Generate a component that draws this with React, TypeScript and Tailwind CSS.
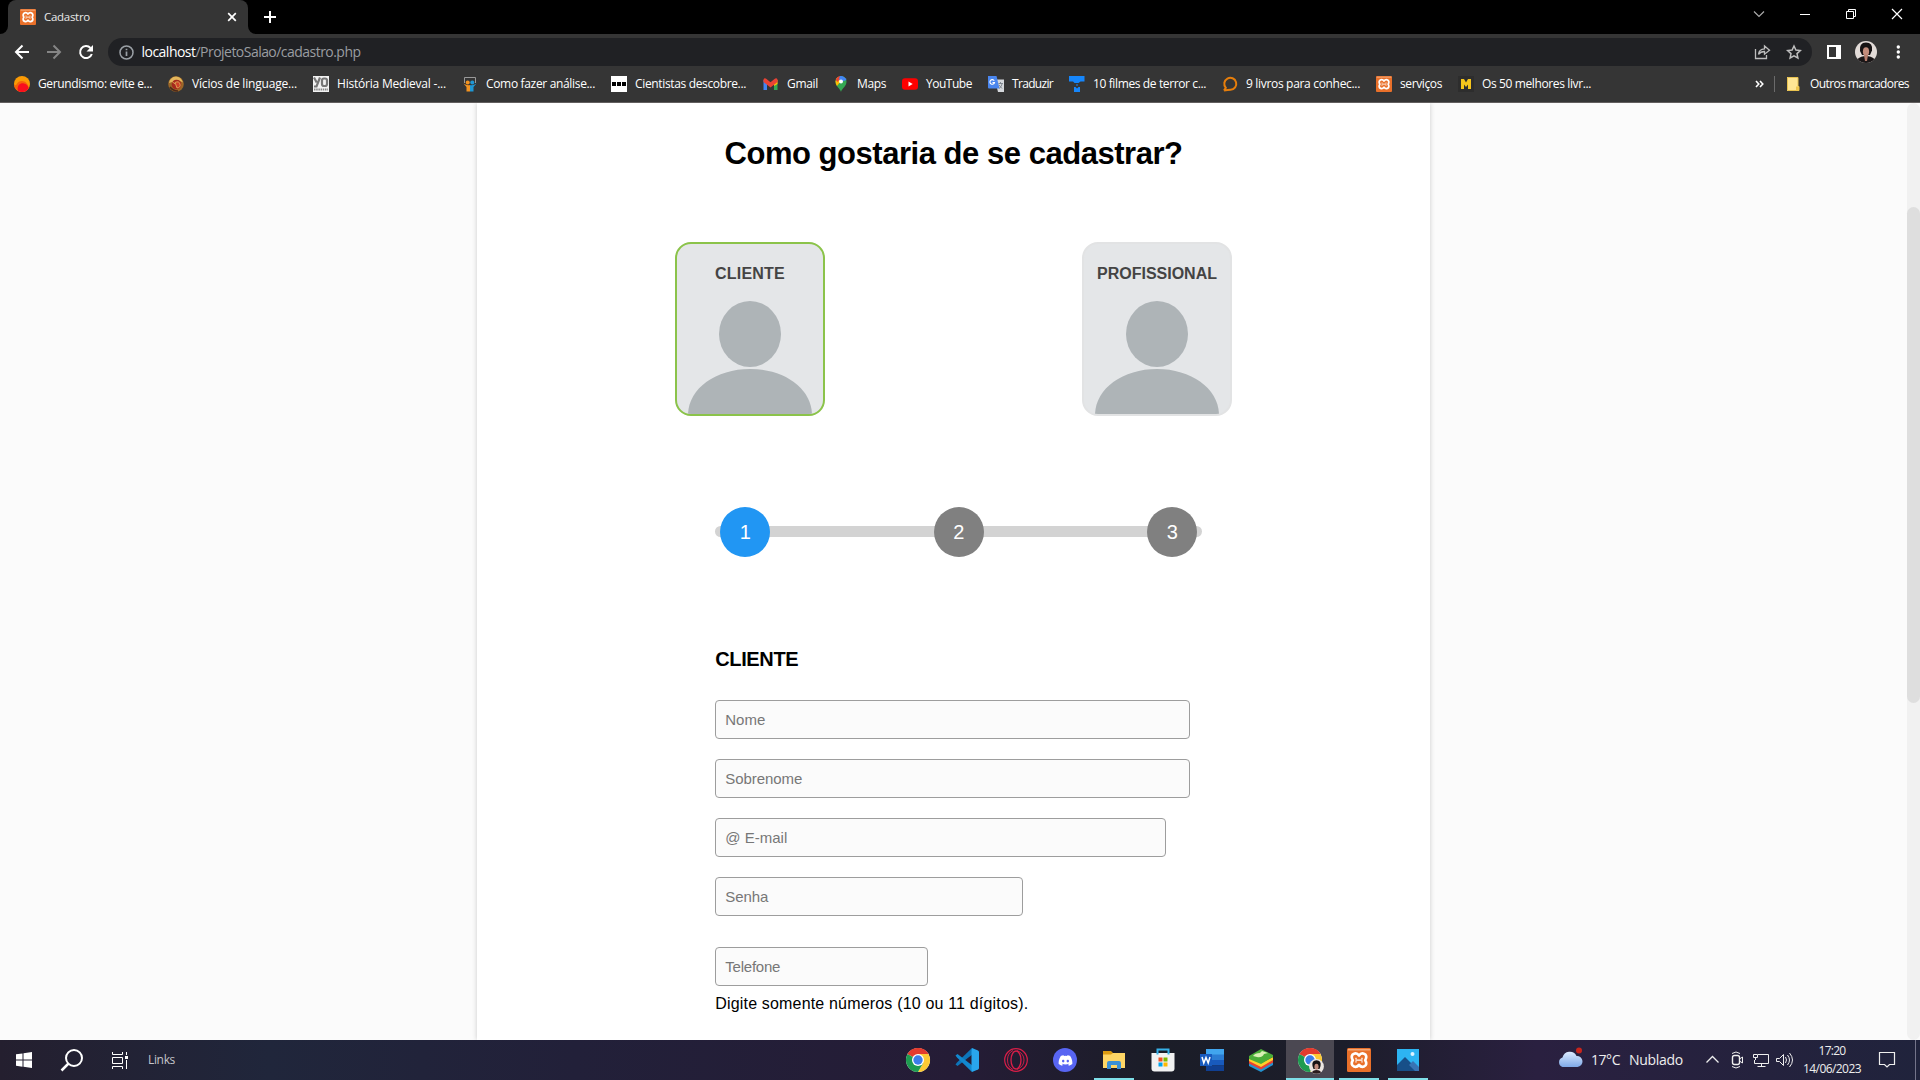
import { useLayoutEffect, useRef, useState, type ReactNode } from "react";
import { FaDiscord } from "react-icons/fa";

/* Single line of text whose tracking is adjusted so that it fills the given width. */
function Fit({ w, className = "", children }: { w: number; className?: string; children: string }) {
  const ref = useRef<HTMLSpanElement>(null);
  const [spacing, setSpacing] = useState(0);
  useLayoutEffect(() => {
    if (ref.current) {
      const natural = ref.current.getBoundingClientRect().width;
      setSpacing((w - natural) / children.length);
    }
  }, [w, children]);
  return (
    <span ref={ref} className={`inline-block shrink-0 whitespace-pre ${className}`} style={{ letterSpacing: `${spacing}px` }}>
      {children}
    </span>
  );
}

function Xampp({ size }: { size: number }) {
  return (
    <svg width={size} height={size} viewBox="0 0 24 24" className="shrink-0">
      <rect width="24" height="24" rx="1.500" fill="#e9702a" />
      <path d="M1 1h22v1.500H1z" fill="#f3a877" />
      <path
        d="M12 7.500C10.500 5.500 8.500 5.200 7 5.800 4.500 6.700 4 9.500 5.800 12.200 4 15 4.500 17.700 7 18.600 8.500 19.200 10.500 18.900 12 16.900 13.500 18.900 15.500 19.200 17 18.600 19.500 17.700 20 15 18.200 12.200 20 9.500 19.500 6.700 17 5.800 15.500 5.200 13.500 5.500 12 7.500z"
        fill="none" stroke="#fff" strokeWidth="2.700" strokeLinejoin="round"
      />
      <path d="M8.500 12.200h7M9 9.800v1.400M15 9.800v1.400M9 13.200v1.400M15 13.200v1.400" stroke="#fff" strokeWidth="1.300" />
    </svg>
  );
}

function ChromeLogo({ avatar = false }: { avatar?: boolean }) {
  return (
    <svg width="24" height="24" viewBox="0 0 24 24" className="overflow-visible">
      <circle cx="12" cy="12" r="12" fill="#fff" />
      <path d="M12 12 1.600 6A12 12 0 0 1 22.400 6z" fill="#e33b2e" />
      <path d="M12 6h10.400A12 12 0 0 1 12 24l5.200-9z" fill="#fcc934" />
      <path d="M1.600 6A12 12 0 0 0 12 24l5.200-9L12 12z" fill="#1e9b50" />
      <path d="M1.600 6A12 12 0 0 1 22.400 6H12v4z" fill="#e33b2e" />
      <circle cx="12" cy="12" r="6" fill="#fff" />
      <circle cx="12" cy="12" r="4.700" fill="#3b7de9" />
      {avatar && (
        <g transform="translate(18.5 18.5)">
          <circle r="7.400" fill="#ece6e2" />
          <path d="M-4-.5Q-5-6 0-6.200 5-6 4-.5L3 2.500h-6z" fill="#171314" />
          <ellipse cy=".3" rx="2.100" ry="3" fill="#c08b7c" />
          <path d="M-4.500 6Q-4 3.500 0 3.500t4.500 2.500Q0 8.500-4.500 6" fill="#2b1d1e" />
        </g>
      )}
    </svg>
  );
}

const bookmarks: { w: number; tw: number; label: string; icon: ReactNode }[] = [
  {
    w: 154, tw: 114, label: "Gerundismo: evite e...",
    icon: (
      <svg width="16" height="16" viewBox="0 0 16 16">
        <circle cx="8" cy="8" r="8" fill="#fb9b05" />
        <path d="M0 8a8 8 0 0 0 14.500 4.600C15.500 6 6 1.500 2.500 8.500 1.800 9.800.5 9.500 0 8" fill="#f6620a" />
        <path d="M4 14.900C2.500 10 6 6.500 10 7.500q3.500.8 4.800 4.700A8 8 0 0 1 4 14.900" fill="#f90f1e" />
      </svg>
    ),
  },
  {
    w: 145, tw: 105, label: "Vícios de linguage...",
    icon: (
      <svg width="16" height="16" viewBox="0 0 16 16">
        <circle cx="8" cy="8" r="7.800" fill="#9c6728" />
        <path d="M1 7Q2 1 8 .5q5 0 7 6L10 4z" fill="#e3b65c" />
        <circle cx="8.500" cy="8.500" r="4.800" fill="#a5291d" />
        <path d="m3.500 5 3.500 3M7 6.500q4-2 5 1.500t-3 4z" fill="#cf4029" stroke="#e3b65c" strokeWidth=".8" />
        <path d="M2 11q3 4 8 4" fill="none" stroke="#4e2817" strokeWidth="1.500" />
      </svg>
    ),
  },
  {
    w: 149, tw: 109, label: "História Medieval -...",
    icon: (
      <svg width="16" height="16" viewBox="0 0 16 16">
        <path d="M0 0h16v16H0z" fill="#f2f2f2" />
        <path d="m1 1.500 2.700 5M7 1.500 3.500 10.500H1" fill="none" stroke="#777" strokeWidth="2.200" />
        <rect x="9" y="2.500" width="5" height="7.500" rx="2" fill="none" stroke="#777" strokeWidth="2.200" />
        <path d="M1 13.500h14" stroke="#888" strokeWidth="1.800" strokeDasharray="1.500 .7" />
      </svg>
    ),
  },
  {
    w: 149, tw: 109, label: "Como fazer análise...",
    icon: (
      <svg width="16" height="16" viewBox="0 0 16 16">
        <path d="M2.500 7V1.500h11V7" fill="none" stroke="#999" strokeWidth="1" />
        <circle cx="5.700" cy="6.500" r="2" fill="#f39321" />
        <circle cx="10.300" cy="6.500" r="2" fill="#1f97d4" />
        <path d="M1.500 7.500Q5 10 8 9v6.500H4.500V11z" fill="#f39321" />
        <path d="M14.500 7.500Q11 10 8 9v6.500h3.500V11z" fill="#1f97d4" />
      </svg>
    ),
  },
  {
    w: 152, tw: 111, label: "Cientistas descobre...",
    icon: (
      <svg width="16" height="16" viewBox="0 0 16 16">
        <path d="M0 0h16v16H0z" fill="#fff" />
        <path d="M1 6h4v4H1zM6 6h4v4H6zM11 6h4v4h-4z" fill="#000" />
      </svg>
    ),
  },
  {
    w: 70, tw: 31, label: "Gmail",
    icon: (
      <svg width="16" height="16" viewBox="0 0 16 16">
        <path d="M.5 4H4v10H.5z" fill="#4285f4" />
        <path d="M11 6h3.500v8H11z" fill="#34a853" />
        <path d="M11 4h3.500v4L11 10z" fill="#fbbc04" />
        <path d="M.5 3.500Q1.500 1.500 3.500 3l4 3.200L11.500 3q2-1.500 3 .5V6l-7 5.500L.5 6z" fill="#ea4335" />
      </svg>
    ),
  },
  {
    w: 69, tw: 29, label: "Maps",
    icon: (
      <svg width="16" height="16" viewBox="0 0 16 16">
        <path d="M8 16C7 12 2.500 10.500 2.500 5.500a5.500 5.500 0 0 1 11 0C13.500 10.500 9 12 8 16" fill="#34a853" />
        <path d="M2.500 5.500Q2.500 2 5 .9L8 5 4 10Q2.500 8 2.500 5.500" fill="#fbbc04" />
        <path d="M2.800 4Q4 .5 7 0L8 2 4.500 6z" fill="#ea4335" />
        <path d="M7 0q4.500-.3 6.500 4L8 6 6 3z" fill="#4285f4" />
        <circle cx="8" cy="5.500" r="2" fill="#fff" />
      </svg>
    ),
  },
  {
    w: 86, tw: 46, label: "YouTube",
    icon: (
      <svg width="16" height="16" viewBox="0 0 16 16">
        <rect y="2.200" width="16" height="11.600" rx="3" fill="#f00" />
        <path d="m6.500 5.500 4.200 2.500-4.200 2.500z" fill="#fff" />
      </svg>
    ),
  },
  {
    w: 81, tw: 41, label: "Traduzir",
    icon: (
      <svg width="16" height="16" viewBox="0 0 16 16">
        <path d="M7 3.500h9V16h-6z" fill="#d5d8dc" />
        <path d="M0 0h8.500l3 12.500H1q-1 0-1-1z" fill="#4a86ee" />
        <path d="M6.200 4.700A2.300 2.300 0 1 0 6.500 6.500h-2" fill="none" stroke="#fff" strokeWidth="1.100" />
        <path d="M10.500 7.500H15M12.500 6v1.500M14 8q-.5 3-3 4.500m0-3.500 3 3.500" fill="none" stroke="#777f88" strokeWidth=".9" />
      </svg>
    ),
  },
  {
    w: 153, tw: 113, label: "10 filmes de terror c...",
    icon: (
      <svg width="16" height="16" viewBox="0 0 16 16">
        <path d="M0 0h15.500v5.500h-4L9.500 7h-4L4 5.500H0zM7 8.500h2v1H7zM5 11h1.500L8 12.500 9.500 11H11v5H5z" fill="#1686fb" />
      </svg>
    ),
  },
  {
    w: 154, tw: 114, label: "9 livros para conhec...",
    icon: (
      <svg width="16" height="16" viewBox="0 0 16 16">
        <path d="M2 14.500 3.800 11.800A6 6 0 1 1 8.500 13.800q-2.500.2-6.500.7" fill="none" stroke="#e77e0b" strokeWidth="2" />
      </svg>
    ),
  },
  { w: 82, tw: 42, label: "serviços", icon: <Xampp size={16} /> },
  {
    w: 140, tw: 109, label: "Os 50 melhores livr...",
    icon: (
      <svg width="16" height="16" viewBox="0 0 16 16">
        <path d="M0 0h16v16H0z" fill="#2d2d2d" />
        <path d="M3 3h3l2 3.500L10 3h3v10h-3V8.500L8 11 6 8.500V13H3z" fill="#f5c51c" />
      </svg>
    ),
  },
];

function BrowserChrome() {
  return (
    <header className="h-[103px] shrink-0 border-b border-[#625f5f] bg-[#353535] font-['Open_Sans',sans-serif] text-white">
      <div className="flex h-[34px] bg-black">
        <div className="flex h-[34px] w-[256px] shrink-0">
          <div className="h-[34px] w-2 bg-[#353535]"><div className="h-full rounded-br-lg bg-black" /></div>
          <div className="flex w-60 items-center rounded-t-lg bg-[#353535] pl-3">
            <Xampp size={16} />
            <Fit w={46} className="ml-2 text-[11.500px] text-[#e8e8e8]">Cadastro</Fit>
            <svg className="mr-[11px] ml-auto" width="10" height="10" viewBox="0 0 10 10"><path d="m1.200 1.200 7.600 7.600m0-7.600L1.200 8.800" stroke="#fff" strokeWidth="1.700" /></svg>
          </div>
          <div className="h-[34px] w-2 bg-[#353535]"><div className="h-full rounded-bl-lg bg-black" /></div>
        </div>
        <svg className="mt-[11px] ml-2" width="12" height="12" viewBox="0 0 12 12"><path d="M0 6h12M6 0v12" stroke="#fff" strokeWidth="2" /></svg>
        <svg className="mt-2 mr-[17px] ml-auto" width="150" height="12" viewBox="0 0 150 12" fill="none" stroke="#fff">
          <path d="m1 3.500 5 5 5-5" stroke="#aaa" strokeWidth="1.200" />
          <path d="M47 6.500h10" />
          <path d="M93.500 3.500h7v7h-7zM95.500 3.500v-2h7v7h-2" />
          <path d="m139 1 10 10m0-10-10 10" strokeWidth="1.200" />
        </svg>
      </div>

      <div className="flex h-9 items-center">
        <svg width="108" height="36" viewBox="0 0 108 36" fill="none" strokeWidth="2">
          <path d="M29 18H16m6.500-6.500L16 18l6.500 6.500" stroke="#fff" />
          <path d="M47 18h13m-6.500-6.500L60 18l-6.500 6.500" stroke="#858585" />
          <path d="M90.500 14A6 6 0 1 0 91.800 20" stroke="#fff" />
          <path d="M93 11v6.500h-6.500z" fill="#fff" />
        </svg>
        <div className="flex h-7 w-[1704px] items-center rounded-full bg-[#202124] pl-[11px]">
          <svg width="15" height="15" viewBox="0 0 15 15" fill="none" stroke="#9aa0a6" strokeWidth="1.500"><circle cx="7.500" cy="7.500" r="6.500" /><path d="M7.500 6.500V11M7.500 3.800v1.500" strokeWidth="1.700" /></svg>
          <Fit w={54} className="ml-[7.500px] text-sm leading-5">localhost</Fit>
          <Fit w={165} className="text-sm leading-5 text-[#9a9da1]">/ProjetoSalao/cadastro.php</Fit>
          <svg className="mr-2.5 ml-auto" width="48" height="18" viewBox="0 0 48 18" fill="none" stroke="#bdbdbd" strokeWidth="1.300">
            <path d="M1.500 6v9.500h11V12" />
            <path d="M4.500 11.500Q5 6 10.500 5.800V3l5 4.200-5 4V8.500q-4 0-6 3" />
            <path d="m40 3 1.900 4.100 4.400.5-3.300 3 .9 4.400-3.900-2.200-3.900 2.200.9-4.400-3.300-3 4.400-.5z" strokeWidth="1.500" />
          </svg>
        </div>
        <svg width="108" height="36" viewBox="0 0 108 36">
          <path d="M15 11h14v14H15zm2 2v10h7V13z" fill="#fff" fillRule="evenodd" />
          <circle cx="54" cy="18" r="11" fill="#e3dcd8" />
          <path d="M48 17q-1-8.500 6-8.500t6 8l-2 4.500h-8z" fill="#171314" />
          <ellipse cx="54" cy="17.500" rx="3.100" ry="4.300" fill="#c38d7c" />
          <path d="M45.500 25q3.500-3 8.500-3t8.500 3a11 11 0 0 1-17 0" fill="#1a1617" />
          <path d="m52 21 1 6h2l1-6z" fill="#b67d6c" />
          <g fill="#fff"><circle cx="86.300" cy="13" r="1.700" /><circle cx="86.300" cy="18" r="1.700" /><circle cx="86.300" cy="23" r="1.700" /></g>
        </svg>
      </div>

      <div className="flex h-7 items-center pl-[14px]">
        {bookmarks.map((b) => (
          <div key={b.label} className="flex shrink-0 items-center gap-2" style={{ width: b.w }}>
            <span className="h-4 w-4 shrink-0">{b.icon}</span>
            <Fit w={b.tw} className="text-[12px] leading-4">{b.label}</Fit>
          </div>
        ))}
        <div className="mr-[11px] ml-auto flex items-center">
          <svg width="9" height="8" viewBox="0 0 9 8" fill="none" stroke="#fff" strokeWidth="1.600"><path d="m1 1 2.800 3L1 7m4-6 2.800 3L5 7" /></svg>
          <span className="ml-2.5 h-4 w-px bg-[#6b6b6b]" />
          <svg className="ml-3" width="13" height="14" viewBox="0 0 13 14"><path d="M0 0h11v9h1v5H0z" fill="#ffe694" /><path d="M.5.500h10.500v9h1v4H.5z" fill="none" stroke="#e8c250" /><path d="M9 9.500h3V14H9z" fill="#eec64d" /></svg>
          <Fit w={99} className="ml-2.5 text-[12px] leading-4">Outros marcadores</Fit>
        </div>
      </div>
    </header>
  );
}

function ProfileCard({ label, width, selected = false }: { label: string; width: number; selected?: boolean }) {
  return (
    <button className={`flex h-[174px] w-[150px] flex-col items-center overflow-hidden rounded-[16px] border-2 bg-[#e4e6e8] ${selected ? "border-[#8bc34a]" : "border-[#e2e3e4]"}`}>
      <Fit w={width} className="mt-[21px] text-base leading-[18px] font-bold text-[#444]">{label}</Fit>
      <svg className="mt-[18px] shrink-0" width="124" height="113" viewBox="0 0 124 113" fill="#aeb4b7">
        <ellipse cx="62" cy="33" rx="31" ry="33" />
        <path d="M0 113C1 87 28 68 62 68s61 19 62 45z" />
      </svg>
    </button>
  );
}

function Step({ n, active = false }: { n: string; active?: boolean }) {
  return (
    <span className={`mt-px flex h-[50px] w-[50px] items-center justify-center rounded-full text-xl text-white ${active ? "bg-[#2196f3]" : "bg-[#808080]"}`}>{n}</span>
  );
}

function Field({ label, textWidth, className }: { label: string; textWidth: number; className: string }) {
  return (
    <div className={`flex h-[39px] items-center rounded-[4px] border border-[#9d9d9d] bg-[#fbfbfb] pl-[9px] ${className}`}>
      <Fit w={textWidth} className="text-[15px] leading-[18px] text-[#777]">{label}</Fit>
    </div>
  );
}

function SignupPage() {
  return (
    <div className="flex min-h-0 flex-1 bg-[#fbfbfb] font-['Liberation_Sans',Arial,sans-serif] text-black">
      <div className="min-w-0 flex-1 overflow-hidden">
        <main className="mx-auto h-full w-1/2 bg-white shadow-[0_0_5px_rgba(0,0,0,0.2)]">
          <h1 className="flex justify-center pt-[33px] text-[31px] leading-9 font-bold"><Fit w={458}>Como gostaria de se cadastrar?</Fit></h1>
          <div className="mx-auto mt-[70px] flex w-[557px] justify-between">
            <ProfileCard label="CLIENTE" width={70} selected />
            <ProfileCard label="PROFISSIONAL" width={120} />
          </div>
          <div className="mt-[90px] ml-[238.500px] flex h-[51px] w-[487px] items-center">
            <div className="flex h-[11px] w-full items-center justify-between rounded-full bg-[#d3d3d3] px-[5px]">
              <Step n="1" active />
              <Step n="2" />
              <Step n="3" />
            </div>
          </div>
          <div className="ml-[238.500px]">
            <h2 className="mt-[90px] text-xl leading-6 font-bold"><Fit w={83}>CLIENTE</Fit></h2>
            <div className="mt-[29px] flex flex-col gap-5">
              <Field label="Nome" textWidth={40} className="w-[475px]" />
              <Field label="Sobrenome" textWidth={77} className="w-[475px]" />
              <Field label="@ E-mail" textWidth={62} className="w-[451px]" />
              <Field label="Senha" textWidth={43} className="w-[308px]" />
            </div>
            <Field label="Telefone" textWidth={55} className="mt-[31px] w-[213px]" />
            <p className="mt-[9px] text-base leading-[18px]"><Fit w={313}>Digite somente números (10 ou 11 dígitos).</Fit></p>
          </div>
        </main>
      </div>
      <div className="h-full w-[13px] rounded-full bg-[#f1f1f1] pt-[104px]">
        <div className="h-[496px] rounded-full bg-[#dedede]" />
      </div>
    </div>
  );
}

const apps: { id: string; state?: "open" | "active"; icon: ReactNode }[] = [
  { id: "chrome", icon: <ChromeLogo /> },
  {
    id: "code",
    icon: (
      <svg width="24" height="24" viewBox="0 0 24 24">
        <path d="M17 0 2 14.500.500 16.500l2 1.500L18 6z" fill="#0d75ba" />
        <path d="M17 24 2 9.500.500 7.500l2-1.500L18 18z" fill="#1288cf" />
        <path d="m17 0 6 2.500Q24 3 24 4v16q0 1-1 1.500L17 24l-.5-3V3z" fill="#29a5ec" />
      </svg>
    ),
  },
  {
    id: "opera",
    icon: (
      <svg width="24" height="24" viewBox="0 0 24 24" fill="none" stroke="#d91e48">
        <circle cx="12" cy="12" r="11.300" strokeWidth="1.200" />
        <ellipse cx="12" cy="12" rx="5" ry="9" strokeWidth="1.300" />
        <path d="M13 2.500q7 3 7 9.500t-7 9.500M9 2.500Q3.500 5 3.500 12T9 21.500" strokeWidth=".9" />
      </svg>
    ),
  },
  {
    id: "discord",
    icon: <span className="flex h-6 w-6 items-center justify-center rounded-full bg-[#5865f2]"><FaDiscord size={15} color="#fff" /></span>,
  },
  {
    id: "explorer", state: "open",
    icon: (
      <svg width="22" height="20" viewBox="0 0 22 20">
        <path d="M0 1h8l2 2h12v5H0z" fill="#dc9b11" />
        <path d="M0 4.500h8L10 3h12v15H0z" fill="#ffd665" />
        <path d="M4 19v-6q0-2 2-2h10q2 0 2 2v6h-4v-4H8v4z" fill="#3c91d5" />
      </svg>
    ),
  },
  {
    id: "store",
    icon: (
      <svg width="24" height="24" viewBox="0 0 24 24">
        <path d="M.5 5h23v15.500q0 3-3 3h-17q-3 0-3-3z" fill="#f2f2f2" />
        <path d="M6.500 6.500v-5h11v5" fill="none" stroke="#36b1e8" strokeWidth="2" />
        <path d="M7.500 9.500h4v4h-4z" fill="#f25022" /><path d="M12.500 9.500h4v4h-4z" fill="#7fba00" />
        <path d="M7.500 14.500h4v4h-4z" fill="#00a4ef" /><path d="M12.500 14.500h4v4h-4z" fill="#ffb900" />
      </svg>
    ),
  },
  {
    id: "word",
    icon: (
      <svg width="24" height="22" viewBox="0 0 24 22">
        <path d="M6 0h18v6H6z" fill="#41a5ee" /><path d="M6 5.500h18V11H6z" fill="#2b7cd3" />
        <path d="M6 11h18v5.500H6z" fill="#185abd" /><path d="M6 16.500h18V22H6z" fill="#103f91" />
        <path d="M0 5h12v12H0z" fill="#185abd" />
        <path d="m2 8 1.800 6L6 8.500 8.200 14 10 8" fill="none" stroke="#fff" strokeWidth="1.500" />
      </svg>
    ),
  },
  {
    id: "bluestacks",
    icon: (
      <svg width="24" height="24" viewBox="0 0 24 24">
        <path d="M0 15v3l12 6 12-7v-3l-12 6z" fill="#2392d0" />
        <path d="M0 12.500v3l12 6 12-7v-3l-12 6z" fill="#e84132" />
        <path d="M0 10v3l12 6 12-7V9l-12 6z" fill="#ffcf2a" />
        <path d="M0 8 12 1l12 6v2L12 16 0 11z" fill="#4aad38" />
        <path d="M4 8q2-3 7-3l2-2 6 2-4 1q-2 4-7 3z" fill="#d9f0b4" />
      </svg>
    ),
  },
  { id: "chrome-profile", state: "active", icon: <ChromeLogo avatar /> },
  { id: "xampp", state: "open", icon: <Xampp size={24} /> },
  {
    id: "photos", state: "open",
    icon: (
      <svg width="22" height="22" viewBox="0 0 22 22">
        <path d="M0 0h22v22H0z" fill="#2db4f2" />
        <path d="m0 16 8-8 14 14H0z" fill="#174f88" />
        <path d="m12 16 4-4 6 6v4h-4z" fill="#3873b4" />
        <circle cx="15.500" cy="5" r="2" fill="#ddf2ff" />
      </svg>
    ),
  },
];

function Taskbar() {
  return (
    <footer className="flex h-10 shrink-0 bg-[linear-gradient(90deg,#241f2f_0%,#20263b_14%,#222039_30%,#251c36_50%,#1b1d28_60%,#1c1d2a_70%,#2a2040_80%,#24223d_92%,#20233c_100%)] font-['Open_Sans',sans-serif] text-[#eee]">
      <div className="flex w-[894px] items-center">
        <svg width="148" height="40" viewBox="0 0 148 40" fill="none" stroke="#fff">
          <path d="m16 14.300 6.500-.9v6.100H16zm7.500-1L32 12v7.500h-8.500zM16 20.500h6.500v6.200l-6.500-1zm7.500 0H32V28l-8.500-1.200z" fill="#fff" stroke="none" />
          <circle cx="74" cy="18" r="8" strokeWidth="2" />
          <path d="m68.500 23.500-7 7" strokeWidth="2.500" />
          <path d="M112.500 12v2.500h10V12M112.500 17.500h10v6h-10zM112.500 29v-2.500h10V29M126.500 12v3m0 5v9" />
          <path d="M125 16h3v3h-3z" fill="#fff" stroke="none" />
        </svg>
        <Fit w={27} className="text-[12px] text-[#c6c6ca]">Links</Fit>
      </div>
      <div className="flex w-[539px] gap-px">
        {apps.map((a) => (
          <div key={a.id} className={`flex h-10 w-12 flex-col items-center ${a.state === "active" ? "bg-[#4b4852]" : ""}`}>
            <div className="flex h-[38px] items-center pt-0.5">{a.icon}</div>
            {a.state && <div className={`h-0.5 bg-[#7fdfe8] ${a.state === "active" ? "w-12" : "w-10"}`} />}
          </div>
        ))}
      </div>
      <div className="ml-auto flex items-center">
        <svg width="28" height="24" viewBox="0 0 28 24" className="mb-1">
          <defs><linearGradient id="cloud" x2="0" y2="1"><stop stopColor="#dcebff" /><stop offset="1" stopColor="#7fa9e8" /></linearGradient></defs>
          <path d="M5 22a5 5 0 0 1 0-9.500A7.500 7.500 0 0 1 19 11a5.500 5.500 0 0 1 1 11z" transform="translate(.5 -1)" fill="url(#cloud)" />
          <circle cx="22" cy="4.500" r="3" fill="#c9251c" />
        </svg>
        <Fit w={29} className="ml-1.5 text-sm">17°C</Fit>
        <Fit w={54} className="ml-[9px] text-sm">Nublado</Fit>
        <svg className="ml-[22px]" width="90" height="40" viewBox="0 0 90 40" fill="none" stroke="#eee">
          <path d="m1.500 22.500 6-6 6 6" strokeWidth="1.300" />
          <rect x="27.500" y="15.500" width="7" height="9" rx="2" strokeWidth="1.400" />
          <path d="m34.500 19 3-2v6l-3-2M27 13.500q4-3 8 0M27 26.500q4 3 8 0" />
          <path d="M53 14.500h10.500v9h-14V20M56.500 23.500v3m-4 0h8M48.500 14.500h4v3h-4zM50.500 17.500V20" />
          <path d="M71.500 18.500h3l4-4v11l-4-4h-3zM80.500 17q2 3 0 6M82.500 15q4 5 0 10M84.500 13q6 7 0 14" />
        </svg>
        <div className="ml-[7px] flex w-[60px] flex-col items-center text-[12px] leading-[18px]">
          <Fit w={27}>17:20</Fit>
          <Fit w={58}>14/06/2023</Fit>
        </div>
        <svg className="ml-4" width="42" height="40" viewBox="0 0 42 40" fill="none" stroke="#eee"><path d="M1.500 12.500h15v12h-5L9 27l-2.500-2.500h-5z" strokeWidth="1.200" /><path d="M37.500 0v40" stroke="#74748a" /></svg>
      </div>
    </footer>
  );
}

export default function App() {
  return (
    <div className="flex h-[1080px] w-[1920px] flex-col overflow-hidden">
      <BrowserChrome />
      <SignupPage />
      <Taskbar />
    </div>
  );
}
